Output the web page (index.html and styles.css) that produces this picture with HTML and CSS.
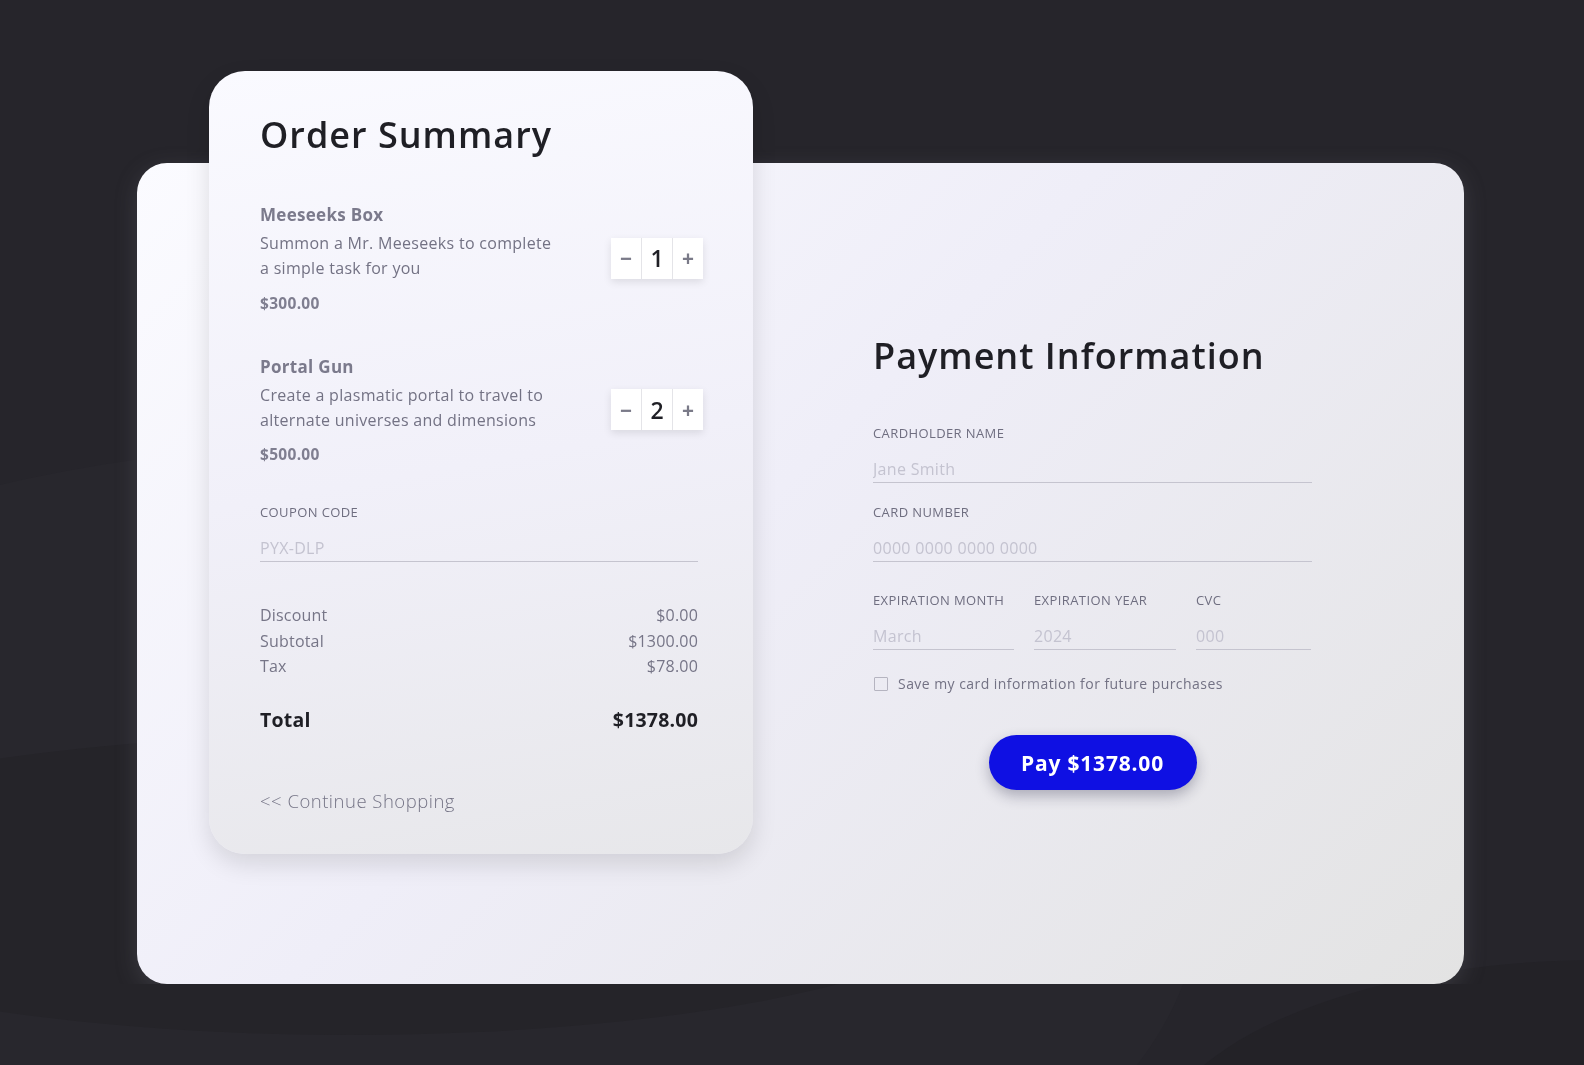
FILE: index.html
```html
<!DOCTYPE html>
<html lang="en">
<head>
  <meta charset="UTF-8">
  <meta name="viewport" content="width=device-width, initial-scale=1.0">
  <title>Checkout</title>
  <link rel="stylesheet" href="styles.css">
</head>
<body>
  <div class="backdrop">
    <div class="bg-shape shape-left"></div>
    <div class="bg-shape shape-low"></div>
    <div class="bg-shape shape-bottom"></div>
  </div>

  <div class="page">
    <div class="checkout">
      <section class="order">
        <h1>Order Summary</h1>

        <div class="item">
          <div class="item-info">
            <h3>Meeseeks Box</h3>
            <p>Summon a Mr. Meeseeks to complete a simple task for you</p>
            <div class="price">$300.00</div>
          </div>
          <div class="qty">
            <span class="qty-btn">&minus;</span>
            <span class="qty-num">1</span>
            <span class="qty-btn">+</span>
          </div>
        </div>

        <div class="item">
          <div class="item-info">
            <h3>Portal Gun</h3>
            <p>Create a plasmatic portal to travel to alternate universes and dimensions</p>
            <div class="price">$500.00</div>
          </div>
          <div class="qty">
            <span class="qty-btn">&minus;</span>
            <span class="qty-num">2</span>
            <span class="qty-btn">+</span>
          </div>
        </div>

        <div class="field coupon">
          <label for="coupon">Coupon Code</label>
          <input id="coupon" type="text" placeholder="PYX-DLP">
        </div>

        <div class="totals">
          <div class="row"><span>Discount</span><span>$0.00</span></div>
          <div class="row"><span>Subtotal</span><span>$1300.00</span></div>
          <div class="row"><span>Tax</span><span>$78.00</span></div>
        </div>

        <div class="row total"><span>Total</span><span>$1378.00</span></div>

        <a class="back" href="#">&lt;&lt; Continue Shopping</a>
      </section>

      <section class="payment">
        <h2>Payment Information</h2>

        <div class="field">
          <label for="name">Cardholder Name</label>
          <input id="name" type="text" placeholder="Jane Smith">
        </div>

        <div class="field card-field">
          <label for="number">Card Number</label>
          <input id="number" type="text" placeholder="0000 0000 0000 0000">
        </div>

        <div class="field-row">
          <div class="field">
            <label for="month">Expiration Month</label>
            <input id="month" type="text" placeholder="March">
          </div>
          <div class="field">
            <label for="year">Expiration Year</label>
            <input id="year" type="text" placeholder="2024">
          </div>
          <div class="field">
            <label for="cvc">CVC</label>
            <input id="cvc" type="text" placeholder="000">
          </div>
        </div>

        <label class="save">
          <span class="box"></span>
          Save my card information for future purchases
        </label>

        <div class="pay-wrap">
          <button class="pay">Pay $1378.00</button>
        </div>
      </section>
    </div>
  </div>
</body>
</html>
```

FILE: styles.css
```css
* {
  box-sizing: border-box;
}
body {
  margin: 0;
  background: #26252b;
  font-family: 'Open Sans', sans-serif;
}

/* faint curves behind the card */
.backdrop {
  position: fixed;
  inset: 0;
  overflow: hidden;
}
.bg-shape {
  position: absolute;
  border-radius: 50%;
}
.shape-left {
  left: -500px;
  top: 445px;
  width: 1700px;
  height: 900px;
  background: #28272d;
}
.shape-low {
  left: -300px;
  top: 735px;
  width: 1300px;
  height: 300px;
  background: #252429;
}
.shape-bottom {
  left: 1150px;
  top: 960px;
  width: 900px;
  height: 400px;
  background: #232227;
}
.page {
  position: relative;
  padding: 163px 0 0 137px;
}
.checkout {
  display: flex;
  width: 1327px;
  height: 821px;
  border-radius: 30px;
  background: linear-gradient(135deg, #fbfbff 0%, #efeef8 45%, #e3e3e3 100%);
  box-shadow: 0 6px 22px rgba(110, 110, 120, 0.3);
}

/* order summary card */
.order {
  margin: -92px 0 0 72px;
  width: 544px;
  height: 783px;
  padding: 37px 55px 0 51px;
  border-radius: 36px;
  background: linear-gradient(170deg, #fafaff 0%, #f1f0f9 50%, #e7e7ea 100%);
  box-shadow: 0 10px 24px rgba(0, 0, 0, 0.12);
}
.order h1 {
  margin: 0;
  font-size: 36px;
  line-height: 54px;
  font-weight: 600;
  letter-spacing: 1px;
  color: #1f1f25;
}
.item {
  display: flex;
  align-items: center;
  justify-content: space-between;
  margin-top: 41px;
}
.item-info h3 {
  margin: 0;
  font-size: 17px;
  line-height: 24px;
  font-weight: 700;
  letter-spacing: 0.3px;
  color: #7b7a8c;
}
.item-info p {
  margin: 4px 0 0;
  width: 300px;
  font-size: 16px;
  line-height: 25.3px;
  letter-spacing: 0.3px;
  color: #737284;
}
.price {
  margin-top: 10px;
  font-size: 15.5px;
  line-height: 22px;
  font-weight: 700;
  letter-spacing: 0.3px;
  color: #7f7e90;
}
.qty {
  display: flex;
  gap: 1px;
  margin-right: -5px;
  background: #e4e4e8;
  box-shadow: 0 3px 8px rgba(0, 0, 0, 0.1);
}
.qty span {
  width: 30px;
  height: 41px;
  display: flex;
  align-items: center;
  justify-content: center;
  background: #fff;
}
.qty-btn {
  font-size: 21px;
  font-weight: 700;
  color: #7a7a88;
}
.qty-num {
  font-size: 23px;
  font-weight: 600;
  color: #1f1f25;
}

/* form fields */
.field label {
  display: block;
  font-size: 13px;
  line-height: 18px;
  letter-spacing: 0.4px;
  text-transform: uppercase;
  color: #6f6e80;
}
.field input {
  display: block;
  width: 100%;
  height: 29px;
  margin-top: 12px;
  padding: 2px 0 0;
  border: none;
  border-bottom: 1px solid #c5c4cf;
  background: transparent;
  font-family: inherit;
  font-size: 16px;
  letter-spacing: 0.3px;
  outline: none;
}
.field input::placeholder {
  color: #c4c3d0;
}
.coupon {
  margin-top: 38px;
}
.totals {
  margin-top: 41px;
}
.row {
  display: flex;
  justify-content: space-between;
  font-size: 16px;
  line-height: 25.5px;
  letter-spacing: 0.2px;
  color: #767587;
}
.row.total {
  margin-top: 25px;
  font-size: 19.5px;
  line-height: 30px;
  font-weight: 700;
  letter-spacing: 0.2px;
  color: #1f1f25;
}
.back {
  display: block;
  margin-top: 52px;
  font-size: 18.5px;
  line-height: 28px;
  font-weight: 300;
  letter-spacing: 0.5px;
  color: #757486;
  text-decoration: none;
}

/* payment */
.payment {
  margin-left: 120px;
  width: 439px;
  padding-top: 166px;
}
.payment h2 {
  margin: 0 0 41px;
  font-size: 36px;
  line-height: 54px;
  font-weight: 600;
  letter-spacing: 1px;
  color: #1f1f25;
}
.card-field {
  margin-top: 20px;
}
.field-row {
  display: grid;
  grid-template-columns: 141px 142px 115px;
  gap: 20px;
  margin-top: 29px;
}
.save {
  display: flex;
  align-items: center;
  gap: 10px;
  margin-top: 24px;
  font-size: 14px;
  line-height: 20px;
  letter-spacing: 0.45px;
  color: #737284;
}
.box {
  width: 14px;
  height: 14px;
  border: 1.5px solid #b5b4c0;
  border-radius: 1px;
  margin-left: 1px;
}
.pay-wrap {
  display: flex;
  justify-content: center;
  margin-top: 41px;
}
.pay {
  width: 208px;
  height: 55px;
  border: none;
  border-radius: 28px;
  background: #0f10e3;
  color: #fff;
  font-family: inherit;
  font-size: 21px;
  font-weight: 700;
  letter-spacing: 0.8px;
  box-shadow: 0 6px 14px rgba(30, 30, 60, 0.3);
}
```
